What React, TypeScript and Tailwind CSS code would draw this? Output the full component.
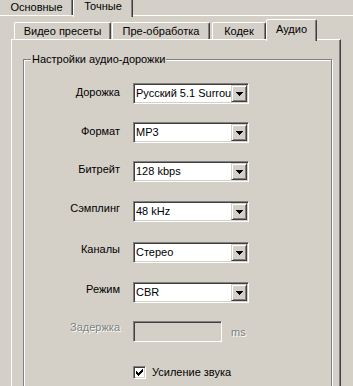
import React from "react";

function Arrow() {
  return (
    <svg width="7" height="4" viewBox="0 0 7 4" shapeRendering="crispEdges" className="mt-[1px]">
      <rect x="0" y="0" width="7" height="1" fill="#000" />
      <rect x="1" y="1" width="5" height="1" fill="#000" />
      <rect x="2" y="2" width="3" height="1" fill="#000" />
      <rect x="3" y="3" width="1" height="1" fill="#000" />
    </svg>
  );
}

function Check() {
  const px: [number, number][] = [
    [6, 0],
    [5, 1], [6, 1],
    [0, 2], [4, 2], [5, 2], [6, 2],
    [0, 3], [1, 3], [3, 3], [4, 3], [5, 3],
    [0, 4], [1, 4], [2, 4], [3, 4], [4, 4],
    [1, 5], [2, 5], [3, 5],
    [2, 6],
  ];
  return (
    <svg width="7" height="7" viewBox="0 0 7 7" shapeRendering="crispEdges">
      {px.map(([x, y]) => (
        <rect key={`${x}-${y}`} x={x} y={y} width="1" height="1" fill="#000" />
      ))}
    </svg>
  );
}

function Combo({ value }: { value: string }) {
  return (
    <div className="flex h-[21px] w-[116px] items-center border border-t-[#808080] border-l-[#808080] border-b-white border-r-white bg-white shadow-[inset_1px_1px_0_#404040,inset_-1px_-1px_0_#d4d0c8]">
      <div className="min-w-0 flex-1 overflow-hidden whitespace-nowrap pl-[2px] pb-[1px] leading-[13px]">
        {value}
      </div>
      <div className="mr-[1px] flex h-[17px] w-[16px] shrink-0 items-center justify-center border border-t-[#d4d0c8] border-l-[#d4d0c8] border-b-[#404040] border-r-[#404040] bg-[#d4d0c8] shadow-[inset_1px_1px_0_#ffffff,inset_-1px_-1px_0_#808080]">
        <Arrow />
      </div>
    </div>
  );
}

const rows = [
  { label: "Дорожка", value: "Русский 5.1 Surround", mt: "mt-0", lp: "pt-[3px]" },
  { label: "Формат", value: "MP3", mt: "mt-[18px]", lp: "pt-[3px]" },
  { label: "Битрейт", value: "128 kbps", mt: "mt-[18px]", lp: "pt-[2px]" },
  { label: "Сэмплинг", value: "48 kHz", mt: "mt-[19px]", lp: "pt-[1px]" },
  { label: "Каналы", value: "Стерео", mt: "mt-[20px]", lp: "pt-[1px]" },
  { label: "Режим", value: "CBR", mt: "mt-[19px]", lp: "pt-[1px]" },
];

const innerTabs = [
  { label: "Видео пресеты", cls: "w-[97px] mr-[1px]" },
  { label: "Пре-обработка", cls: "w-[98px] mr-[2px]" },
  { label: "Кодек", cls: "w-[54px]" },
];

export default function App() {
  return (
    <div className="relative flex h-[386px] w-[353px] flex-col overflow-hidden bg-[#d4d0c8] font-['Liberation_Sans',Arial,sans-serif] text-[11px] leading-[13px] text-black">
      {/* outer tab strip */}
      <div className="flex h-[15px] shrink-0 items-end">
        <div className="ml-[-2px] flex h-[17px] w-[75px] items-end justify-center rounded-t-[2px] border-l border-t border-r border-white border-r-[#404040] pb-[1px] pl-[2px] shadow-[inset_-1px_0_0_#808080]">
          Основные
        </div>
        <div className="relative z-10 mb-[-2px] flex h-[19px] w-[60px] items-end justify-center rounded-t-[2px] border-l border-t border-r border-white border-r-[#404040] bg-[#d4d0c8] pb-[4px] shadow-[inset_-1px_0_0_#808080]">
          Точные
        </div>
      </div>

      {/* outer panel */}
      <div className="flex flex-1 flex-col border-t border-white">
        {/* inner tab strip */}
        <div className="ml-[14px] mt-[3px] flex h-[20px] shrink-0 items-end">
          {innerTabs.map((t) => (
            <div
              key={t.label}
              className={`${t.cls} flex h-[17px] items-start justify-center whitespace-nowrap rounded-t-[2px] border-l border-t border-r border-white border-r-[#404040] pt-[2px] shadow-[inset_-1px_0_0_#808080]`}
            >
              {t.label}
            </div>
          ))}
          <div className="relative z-10 mb-[-2px] flex h-[22px] w-[51px] items-start justify-center rounded-t-[2px] border-l border-t border-r border-white border-r-[#404040] bg-[#d4d0c8] pt-[3px] shadow-[inset_-1px_0_0_#808080]">
            Аудио
          </div>
        </div>

        {/* inner panel */}
        <div className="ml-[11px] flex w-[330px] flex-1 flex-col border-l border-t border-r border-white border-r-[#404040] shadow-[inset_-1px_0_0_#808080]">
          {/* group box */}
          <div className="relative ml-[11px] mt-[19px] w-[309px] border border-[#808080] pb-[30px] pt-[23px] shadow-[inset_1px_1px_0_#ffffff,1px_1px_0_#ffffff]">
            <span className="absolute left-[7px] top-[-7px] bg-[#d4d0c8] px-[1px] leading-[13px]">
              Настройки аудио-дорожки
            </span>

            {rows.map((r) => (
              <div key={r.label} className={`${r.mt} flex items-start`}>
                <div className={`w-[96px] text-right ${r.lp}`}>{r.label}</div>
                <div className="ml-[13px]">
                  <Combo value={r.value} />
                </div>
              </div>
            ))}

            <div className="mt-[18px] flex items-start">
              <div className="w-[96px] text-right text-[#808080] [text-shadow:1px_1px_0_#ffffff]">
                Задержка
              </div>
              <div className="ml-[13px] h-[21px] w-[89px] border border-t-[#808080] border-l-[#808080] border-b-white border-r-white bg-[#d4d0c8] shadow-[inset_1px_1px_0_#404040,inset_-1px_-1px_0_#d4d0c8]" />
              <div className="ml-[9px] pt-[5px] text-[#808080] [text-shadow:1px_1px_0_#ffffff]">ms</div>
            </div>

            <div className="mt-[24px] flex items-center pl-[109px]">
              <div className="flex h-[13px] w-[13px] items-center justify-center border border-t-[#808080] border-l-[#808080] border-b-white border-r-white bg-white shadow-[inset_1px_1px_0_#404040,inset_-1px_-1px_0_#d4d0c8]">
                <Check />
              </div>
              <div className="ml-[6px]">Усиление звука</div>
            </div>
          </div>
        </div>
      </div>
    </div>
  );
}
